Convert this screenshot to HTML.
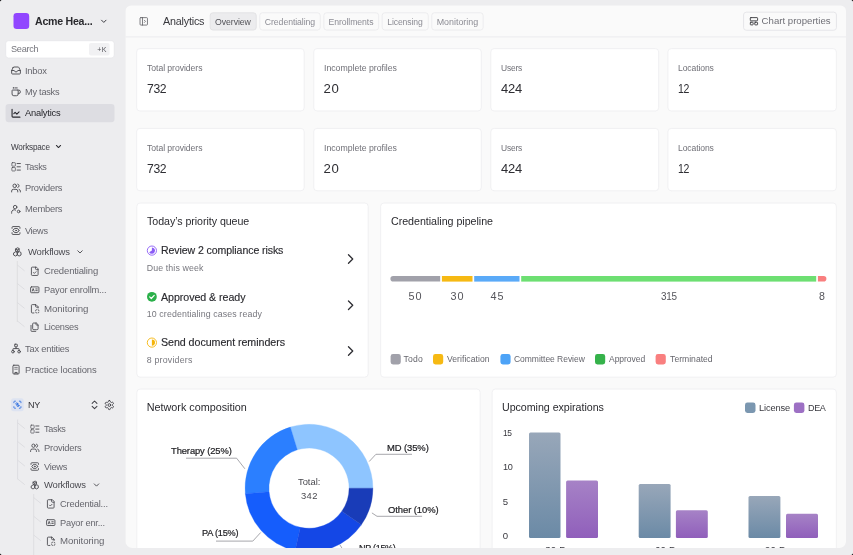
<!DOCTYPE html><html><head><meta charset="utf-8"><title>Analytics</title><style>

html,body{margin:0;padding:0;background:#000;}
body{width:853px;height:555px;overflow:hidden;position:relative;font-family:"Liberation Sans",sans-serif;}
#win{position:absolute;left:0;top:0;width:853px;height:555px;background:#ededef;border-radius:3px;overflow:hidden;}
#in{position:absolute;left:-8px;top:-8px;width:869px;height:571px;background:#ededef;will-change:transform;filter:blur(0.35px);}
#off{position:absolute;left:8px;top:8px;width:853px;height:555px;}
.t{position:absolute;white-space:nowrap;}
.a{position:absolute;}
svg{position:absolute;overflow:visible;}
.ic{fill:none;stroke:#4a4a50;stroke-width:2;stroke-linecap:round;stroke-linejoin:round;}

</style></head><body><div id="win"><div id="in"><div id="off">
<svg style="left:0;top:0" width="853" height="555">
<rect x="125.6" y="5.5" width="720.4" height="542.5" rx="5.5" fill="#fafafa"/>
<rect x="125.60" y="36.50" width="720.40" height="0.80" fill="#e8e8eb"/>
<rect x="13.50" y="13.10" width="15.70" height="15.80" fill="#9146ff" rx="3.2"/>
</svg>
<div class="t" style="top:15px;font-size:11.2px;line-height:12px;color:#2a2a2e;font-weight:700;letter-spacing:-0.263px;left:35.20px;transform:scaleX(0.9472);transform-origin:left center;"><span>Acme Hea...</span></div>
<svg style="left:0;top:0" width="853" height="555">
<g class="ic" transform="translate(99.30 16.80) scale(0.3750)" style="stroke:#3a3a40;stroke-width:2.6"><path d="m6 9 6 6 6-6"/></g>
<rect x="5.70" y="40.70" width="108.50" height="17.30" fill="#fff" rx="3" stroke="#e2e2e6" stroke-width="0.6"/>
</svg>
<div class="t" style="top:43px;font-size:9.8px;line-height:11px;color:#76767d;letter-spacing:-0.301px;left:10.70px;transform:scaleX(0.9377);transform-origin:left center;"><span>Search</span></div>
<svg style="left:0;top:0" width="853" height="555">
<rect x="89.00" y="43.10" width="20.60" height="12.50" fill="#f1f1f3" rx="2"/>
</svg>
<div class="t" style="top:46px;font-size:7px;line-height:7px;color:#55555b;letter-spacing:0.334px;left:97.30px;"><span>+K</span></div>
<svg style="left:0;top:0" width="853" height="555">
<rect x="5.60" y="104.10" width="108.90" height="18.10" fill="#dddde2" rx="3.2"/>
<g class="ic" transform="translate(10.75 65.25) scale(0.4375)" style="stroke:#4a4a50;stroke-width:2.1"><path d="M22 12h-6l-2 3h-4l-2-3H2"/><path d="M5.45 5.11 2 12v6a2 2 0 0 0 2 2h16a2 2 0 0 0 2-2v-6l-3.45-6.89A2 2 0 0 0 16.76 4H7.24a2 2 0 0 0-1.79 1.11z"/></g>
</svg>
<div class="t" style="top:65px;font-size:9.9px;line-height:11px;color:#66666d;letter-spacing:-0.256px;left:25.40px;transform:scaleX(0.9460);transform-origin:left center;"><span>Inbox</span></div>
<svg style="left:0;top:0" width="853" height="555">
<g class="ic" transform="translate(10.75 86.55) scale(0.4375)" style="stroke:#4a4a50;stroke-width:2.1"><path d="M10 2v2"/><path d="M14 2v2"/><path d="M6 2v2"/><path d="M16 8a1 1 0 0 1 1 1v8a4 4 0 0 1-4 4H7a4 4 0 0 1-4-4V9a1 1 0 0 1 1-1h14a4 4 0 1 1 0 8h-1"/></g>
</svg>
<div class="t" style="top:86px;font-size:9.9px;line-height:11px;color:#66666d;letter-spacing:-0.281px;left:25.40px;transform:scaleX(0.9351);transform-origin:left center;"><span>My tasks</span></div>
<svg style="left:0;top:0" width="853" height="555">
<g class="ic" transform="translate(10.75 107.95) scale(0.4375)" style="stroke:#26262b;stroke-width:2.5"><path d="M3 3v16a2 2 0 0 0 2 2h16"/><path d="m19 9-5 5-4-4-3 3"/></g>
</svg>
<div class="t" style="top:107px;font-size:9.9px;line-height:11px;color:#26262b;letter-spacing:-0.215px;left:25.40px;transform:scaleX(0.9445);transform-origin:left center;"><span>Analytics</span></div>
<div class="t" style="top:142px;font-size:8.6px;line-height:10px;color:#3a3a40;letter-spacing:-0.215px;left:10.50px;transform:scaleX(0.9488);transform-origin:left center;"><span>Workspace</span></div>
<svg style="left:0;top:0" width="853" height="555">
<g class="ic" transform="translate(54.30 142.30) scale(0.3500)" style="stroke:#2e2e33;stroke-width:3"><path d="m6 9 6 6 6-6"/></g>
<g class="ic" transform="translate(10.75 161.55) scale(0.4375)" style="stroke:#4a4a50;stroke-width:2.1"><rect x="2.500" y="2.500" width="8" height="8" rx="1.200" stroke-width="1.600"/><rect x="2.500" y="13.500" width="8" height="8" rx="1.200" stroke-width="1.600"/><path d="M14.500 4.500h7.500"/><path d="M14.500 12h7.500"/><path d="M14.500 19.500h7.500"/></g>
</svg>
<div class="t" style="top:161px;font-size:9.9px;line-height:11px;color:#66666d;letter-spacing:-0.377px;left:25.40px;transform:scaleX(0.9224);transform-origin:left center;"><span>Tasks</span></div>
<svg style="left:0;top:0" width="853" height="555">
<g class="ic" transform="translate(10.75 182.75) scale(0.4375)" style="stroke:#4a4a50;stroke-width:2.1"><path d="M16 21v-2a4 4 0 0 0-4-4H6a4 4 0 0 0-4 4v2"/><circle cx="9" cy="7" r="4"/><path d="M22 21v-2a4 4 0 0 0-3-3.87"/><path d="M16 3.13a4 4 0 0 1 0 7.75"/></g>
</svg>
<div class="t" style="top:182px;font-size:9.9px;line-height:11px;color:#66666d;letter-spacing:-0.237px;left:25.40px;transform:scaleX(0.9417);transform-origin:left center;"><span>Providers</span></div>
<svg style="left:0;top:0" width="853" height="555">
<g class="ic" transform="translate(10.75 204.05) scale(0.4375)" style="stroke:#4a4a50;stroke-width:2.1"><circle cx="10" cy="7" r="4"/><path d="M2 21v-2a6 6 0 0 1 9-5.2"/><circle cx="18" cy="17" r="3"/></g>
</svg>
<div class="t" style="top:203px;font-size:9.9px;line-height:11px;color:#66666d;letter-spacing:-0.274px;left:25.40px;transform:scaleX(0.9491);transform-origin:left center;"><span>Members</span></div>
<svg style="left:0;top:0" width="853" height="555">
<g class="ic" transform="translate(10.75 225.25) scale(0.4375)" style="stroke:#4a4a50;stroke-width:2.1"><path d="M21 17v2a2 2 0 0 1-2 2H5a2 2 0 0 1-2-2v-2"/><path d="M21 7V5a2 2 0 0 0-2-2H5a2 2 0 0 0-2 2v2"/><circle cx="12" cy="12" r="1"/><path d="M18.944 12.33a1 1 0 0 0 0-.66 7.5 7.5 0 0 0-13.888 0 1 1 0 0 0 0 .66 7.5 7.5 0 0 0 13.888 0"/></g>
</svg>
<div class="t" style="top:225px;font-size:9.9px;line-height:11px;color:#66666d;letter-spacing:-0.357px;left:25.40px;transform:scaleX(0.9295);transform-origin:left center;"><span>Views</span></div>
<svg style="left:0;top:0" width="853" height="555">
<g class="ic" transform="translate(12.05 246.85) scale(0.4375)" style="stroke:#4a4a50;stroke-width:2.1"><path d="M12 2.5 7.8 4.9v4.8L12 12l4.200-2.3V4.900z"/><path d="M7.800 11.500 3.500 13.900v4.800L7.800 21l4.200-2.300v-4.800z"/><path d="M16.200 11.500 12 13.900v4.800l4.200 2.300 4.300-2.300v-4.800z"/><path d="M7.800 4.900 12 7.200l4.200-2.300"/><path d="M12 7.200V12"/></g>
</svg>
<div class="t" style="top:246px;font-size:9.9px;line-height:11px;color:#4a4a50;letter-spacing:-0.189px;left:27.80px;transform:scaleX(0.9579);transform-origin:left center;"><span>Workflows</span></div>
<svg style="left:0;top:0" width="853" height="555">
<g class="ic" transform="translate(75.50 247.40) scale(0.3750)" style="stroke:#3e3e44;stroke-width:2.3"><path d="m6 9 6 6 6-6"/></g>
<path d="M17.3 261V322M17.3 265.0L24.5 270.8M17.3 283.5L24.5 289.3M17.3 302.5L24.5 308.3M17.3 320.9L24.5 326.7" fill="none" stroke="#d9d9dd" stroke-width="0.8"/>
<g class="ic" transform="translate(29.75 266.30) scale(0.4167)" style="stroke:#4a4a50;stroke-width:2.1"><path d="M15 2H6a2 2 0 0 0-2 2v16a2 2 0 0 0 2 2h12a2 2 0 0 0 2-2V7Z"/><path d="M14 2v4a2 2 0 0 0 2 2h4"/><path d="m9 15 2 2 4-4"/></g>
</svg>
<div class="t" style="top:265px;font-size:9.9px;line-height:11px;color:#66666d;letter-spacing:-0.150px;left:43.60px;transform:scaleX(0.9610);transform-origin:left center;"><span>Credentialing</span></div>
<svg style="left:0;top:0" width="853" height="555">
<g class="ic" transform="translate(29.75 284.80) scale(0.4167)" style="stroke:#4a4a50;stroke-width:2.1"><rect x="2" y="5" width="20" height="14" rx="2"/><path d="M6 15l2.200-6 2.200 6"/><path d="M14.500 10h3.500"/><path d="M14.500 14h3.500"/></g>
</svg>
<div class="t" style="top:284px;font-size:9.9px;line-height:11px;color:#66666d;letter-spacing:-0.200px;left:43.60px;transform:scaleX(0.9447);transform-origin:left center;"><span>Payor enrollm...</span></div>
<svg style="left:0;top:0" width="853" height="555">
<g class="ic" transform="translate(29.75 303.80) scale(0.4167)" style="stroke:#4a4a50;stroke-width:2.1"><path d="M20 10V7l-5-5H6a2 2 0 0 0-2 2v16a2 2 0 0 0 2 2h4"/><path d="M14 2v4a2 2 0 0 0 2 2h4"/><path d="M16 14a2 2 0 0 0-2 2"/><path d="M20 14a2 2 0 0 1 2 2"/><path d="M20 22a2 2 0 0 0 2-2"/><path d="M16 22a2 2 0 0 1-2-2"/></g>
</svg>
<div class="t" style="top:303px;font-size:9.9px;line-height:11px;color:#66666d;letter-spacing:-0.080px;left:43.60px;transform:scaleX(0.9805);transform-origin:left center;"><span>Monitoring</span></div>
<svg style="left:0;top:0" width="853" height="555">
<g class="ic" transform="translate(29.75 322.20) scale(0.4167)" style="stroke:#4a4a50;stroke-width:2.1"><path d="M20 7h-3a2 2 0 0 1-2-2V2"/><path d="M9 18a2 2 0 0 1-2-2V4a2 2 0 0 1 2-2h7l4 4v10a2 2 0 0 1-2 2Z"/><path d="M3 7.600v12.800A1.600 1.600 0 0 0 4.600 22h9.800"/></g>
</svg>
<div class="t" style="top:321px;font-size:9.9px;line-height:11px;color:#66666d;letter-spacing:-0.288px;left:43.60px;transform:scaleX(0.9333);transform-origin:left center;"><span>Licenses</span></div>
<svg style="left:0;top:0" width="853" height="555">
<g class="ic" transform="translate(10.75 343.35) scale(0.4375)" style="stroke:#4a4a50;stroke-width:2.1"><circle cx="5" cy="19" r="3"/><circle cx="19" cy="19" r="3"/><rect x="9" y="2" width="6" height="6" rx="1"/><path d="M5 16v-3a1 1 0 0 1 1-1h12a1 1 0 0 1 1 1v3"/><path d="M12 12V8"/></g>
</svg>
<div class="t" style="top:343px;font-size:9.9px;line-height:11px;color:#66666d;letter-spacing:-0.205px;left:25.20px;transform:scaleX(0.9416);transform-origin:left center;"><span>Tax entities</span></div>
<svg style="left:0;top:0" width="853" height="555">
<g class="ic" transform="translate(10.75 364.35) scale(0.4375)" style="stroke:#4a4a50;stroke-width:2.1"><rect x="5" y="2" width="14" height="20" rx="2"/><path d="M9.500 22v-3.500h5v3.500"/><path d="M9 7h6" stroke-width="1.500"/><path d="M9 11h6" stroke-width="1.500"/></g>
</svg>
<div class="t" style="top:364px;font-size:9.9px;line-height:11px;color:#66666d;letter-spacing:-0.153px;left:25.20px;transform:scaleX(0.9574);transform-origin:left center;"><span>Practice locations</span></div>
<svg style="left:0;top:0" width="853" height="555">
<rect x="11.10" y="398.20" width="12.60" height="13.00" fill="#dde3f1" rx="2.5"/>
<g class="ic" transform="translate(12.70 400.00) scale(0.3917)" style="stroke:#2f6fe0;stroke-width:2.2"><path d="M3 7V5a2 2 0 0 1 2-2h2"/><path d="M17 3h2a2 2 0 0 1 2 2v2"/><path d="M21 17v2a2 2 0 0 1-2 2h-2"/><path d="M7 21H5a2 2 0 0 1-2-2v-2"/><circle cx="10.500" cy="9.700" r="2.500"/><circle cx="13.500" cy="14.300" r="2.500"/></g>
</svg>
<div class="t" style="top:399px;font-size:9.9px;line-height:11px;color:#333338;letter-spacing:-0.400px;left:28.10px;transform:scaleX(0.9160);transform-origin:left center;"><span>NY</span></div>
<svg style="left:0;top:0" width="853" height="555">
<g class="ic" transform="translate(88.80 399.10) scale(0.4792)" style="stroke:#3e3e44;stroke-width:2.1"><path d="m7 15 5 5 5-5"/><path d="m7 9 5-5 5 5"/></g>
<g class="ic" transform="translate(103.90 399.60) scale(0.4542)" style="stroke:#3e3e44;stroke-width:2"><path d="M12.220 2h-.440a2 2 0 0 0-2 2v.180a2 2 0 0 1-1 1.730l-.430.250a2 2 0 0 1-2 0l-.150-.080a2 2 0 0 0-2.730.730l-.220.380a2 2 0 0 0 .730 2.730l.150.100a2 2 0 0 1 1 1.720v.510a2 2 0 0 1-1 1.740l-.150.090a2 2 0 0 0-.730 2.730l.220.380a2 2 0 0 0 2.730.730l.150-.080a2 2 0 0 1 2 0l.430.250a2 2 0 0 1 1 1.730V20a2 2 0 0 0 2 2h.440a2 2 0 0 0 2-2v-.180a2 2 0 0 1 1-1.730l.430-.250a2 2 0 0 1 2 0l.150.080a2 2 0 0 0 2.730-.730l.220-.390a2 2 0 0 0-.730-2.730l-.150-.080a2 2 0 0 1-1-1.740v-.500a2 2 0 0 1 1-1.740l.150-.090a2 2 0 0 0 .730-2.730l-.220-.380a2 2 0 0 0-2.730-.730l-.150.080a2 2 0 0 1-2 0l-.430-.250a2 2 0 0 1-1-1.730V4a2 2 0 0 0-2-2z"/><circle cx="12" cy="12" r="3"/></g>
<path d="M17.6 419.5V479.3M17.6 422.8L24.8 428.6M17.6 441.5L24.8 447.3M17.6 460.2L24.8 466.0M17.6 478.9L24.8 484.7" fill="none" stroke="#d9d9dd" stroke-width="0.8"/>
<g class="ic" transform="translate(29.75 424.10) scale(0.4167)" style="stroke:#4a4a50;stroke-width:2.1"><rect x="2.500" y="2.500" width="8" height="8" rx="1.200" stroke-width="1.600"/><rect x="2.500" y="13.500" width="8" height="8" rx="1.200" stroke-width="1.600"/><path d="M14.500 4.500h7.500"/><path d="M14.500 12h7.500"/><path d="M14.500 19.500h7.500"/></g>
</svg>
<div class="t" style="top:423px;font-size:9.9px;line-height:11px;color:#66666d;letter-spacing:-0.377px;left:43.90px;transform:scaleX(0.9224);transform-origin:left center;"><span>Tasks</span></div>
<svg style="left:0;top:0" width="853" height="555">
<g class="ic" transform="translate(29.75 442.80) scale(0.4167)" style="stroke:#4a4a50;stroke-width:2.1"><path d="M16 21v-2a4 4 0 0 0-4-4H6a4 4 0 0 0-4 4v2"/><circle cx="9" cy="7" r="4"/><path d="M22 21v-2a4 4 0 0 0-3-3.87"/><path d="M16 3.13a4 4 0 0 1 0 7.75"/></g>
</svg>
<div class="t" style="top:442px;font-size:9.9px;line-height:11px;color:#66666d;letter-spacing:-0.220px;left:43.90px;transform:scaleX(0.9461);transform-origin:left center;"><span>Providers</span></div>
<svg style="left:0;top:0" width="853" height="555">
<g class="ic" transform="translate(29.75 461.50) scale(0.4167)" style="stroke:#4a4a50;stroke-width:2.1"><path d="M21 17v2a2 2 0 0 1-2 2H5a2 2 0 0 1-2-2v-2"/><path d="M21 7V5a2 2 0 0 0-2-2H5a2 2 0 0 0-2 2v2"/><circle cx="12" cy="12" r="1"/><path d="M18.944 12.33a1 1 0 0 0 0-.66 7.5 7.5 0 0 0-13.888 0 1 1 0 0 0 0 .66 7.5 7.5 0 0 0 13.888 0"/></g>
</svg>
<div class="t" style="top:461px;font-size:9.9px;line-height:11px;color:#66666d;letter-spacing:-0.312px;left:43.90px;transform:scaleX(0.9388);transform-origin:left center;"><span>Views</span></div>
<svg style="left:0;top:0" width="853" height="555">
<g class="ic" transform="translate(29.75 480.20) scale(0.4167)" style="stroke:#4a4a50;stroke-width:2.1"><path d="M12 2.5 7.8 4.9v4.8L12 12l4.200-2.3V4.900z"/><path d="M7.800 11.500 3.500 13.900v4.800L7.800 21l4.200-2.300v-4.800z"/><path d="M16.200 11.500 12 13.900v4.800l4.200 2.300 4.300-2.300v-4.800z"/><path d="M7.800 4.900 12 7.200l4.200-2.300"/><path d="M12 7.200V12"/></g>
</svg>
<div class="t" style="top:479px;font-size:9.9px;line-height:11px;color:#4a4a50;letter-spacing:-0.189px;left:43.90px;transform:scaleX(0.9579);transform-origin:left center;"><span>Workflows</span></div>
<svg style="left:0;top:0" width="853" height="555">
<g class="ic" transform="translate(92.00 480.50) scale(0.3750)" style="stroke:#3e3e44;stroke-width:2.3"><path d="m6 9 6 6 6-6"/></g>
<path d="M33.7 494V555M33.7 497.59999999999997L40.900000000000006 503.4M33.7 516.3000000000001L40.900000000000006 522.1M33.7 535.0L40.900000000000006 540.8" fill="none" stroke="#d9d9dd" stroke-width="0.8"/>
<g class="ic" transform="translate(45.75 498.90) scale(0.4167)" style="stroke:#4a4a50;stroke-width:2.1"><path d="M15 2H6a2 2 0 0 0-2 2v16a2 2 0 0 0 2 2h12a2 2 0 0 0 2-2V7Z"/><path d="M14 2v4a2 2 0 0 0 2 2h4"/><path d="m9 15 2 2 4-4"/></g>
</svg>
<div class="t" style="top:498px;font-size:9.9px;line-height:11px;color:#66666d;letter-spacing:-0.197px;left:59.80px;transform:scaleX(0.9433);transform-origin:left center;"><span>Credential...</span></div>
<svg style="left:0;top:0" width="853" height="555">
<g class="ic" transform="translate(45.75 517.60) scale(0.4167)" style="stroke:#4a4a50;stroke-width:2.1"><rect x="2" y="5" width="20" height="14" rx="2"/><path d="M6 15l2.200-6 2.200 6"/><path d="M14.500 10h3.500"/><path d="M14.500 14h3.500"/></g>
</svg>
<div class="t" style="top:517px;font-size:9.9px;line-height:11px;color:#66666d;letter-spacing:-0.225px;left:59.80px;transform:scaleX(0.9370);transform-origin:left center;"><span>Payor enr...</span></div>
<svg style="left:0;top:0" width="853" height="555">
<g class="ic" transform="translate(45.75 536.30) scale(0.4167)" style="stroke:#4a4a50;stroke-width:2.1"><path d="M20 10V7l-5-5H6a2 2 0 0 0-2 2v16a2 2 0 0 0 2 2h4"/><path d="M14 2v4a2 2 0 0 0 2 2h4"/><path d="M16 14a2 2 0 0 0-2 2"/><path d="M20 14a2 2 0 0 1 2 2"/><path d="M20 22a2 2 0 0 0 2-2"/><path d="M16 22a2 2 0 0 1-2-2"/></g>
</svg>
<div class="t" style="top:535px;font-size:9.9px;line-height:11px;color:#66666d;letter-spacing:-0.090px;left:59.80px;transform:scaleX(0.9780);transform-origin:left center;"><span>Monitoring</span></div>
<svg style="left:0;top:0" width="853" height="555">
<g class="ic" transform="translate(138.80 16.40) scale(0.4125)" style="stroke:#55555b;stroke-width:1.8"><rect x="3" y="3" width="18" height="18" rx="2"/><path d="M9 3v18"/><path d="m13.500 9.300 2.700 2.700-2.700 2.700"/></g>
</svg>
<div class="t" style="top:15px;font-size:11.3px;line-height:12px;color:#38383d;letter-spacing:-0.209px;left:162.50px;transform:scaleX(0.9530);transform-origin:left center;"><span>Analytics</span></div>
<svg style="left:0;top:0" width="853" height="555">
<rect x="210.15" y="12.75" width="46.10" height="17.30" fill="#ececee" rx="2.8" stroke="#dcdce0" stroke-width="0.7"/>
</svg>
<div class="t" style="top:17px;font-size:8.9px;line-height:10px;color:#525258;letter-spacing:-0.077px;left:133.20px;width:200px;text-align:center;text-indent:-0.077px;transform:scaleX(0.9819);transform-origin:center center;"><span>Overview</span></div>
<svg style="left:0;top:0" width="853" height="555">
<rect x="259.75" y="12.75" width="60.50" height="17.30" fill="#fafafa" rx="2.8" stroke="#e6e6e9" stroke-width="0.7"/>
</svg>
<div class="t" style="top:17px;font-size:8.9px;line-height:10px;color:#8c8c94;letter-spacing:-0.075px;left:190.00px;width:200px;text-align:center;text-indent:-0.075px;transform:scaleX(0.9786);transform-origin:center center;"><span>Credentialing</span></div>
<svg style="left:0;top:0" width="853" height="555">
<rect x="323.85" y="12.75" width="54.80" height="17.30" fill="#fafafa" rx="2.8" stroke="#e6e6e9" stroke-width="0.7"/>
</svg>
<div class="t" style="top:17px;font-size:8.9px;line-height:10px;color:#8c8c94;letter-spacing:-0.084px;left:251.25px;width:200px;text-align:center;text-indent:-0.084px;transform:scaleX(0.9778);transform-origin:center center;"><span>Enrollments</span></div>
<svg style="left:0;top:0" width="853" height="555">
<rect x="382.15" y="12.75" width="46.10" height="17.30" fill="#fafafa" rx="2.8" stroke="#e6e6e9" stroke-width="0.7"/>
</svg>
<div class="t" style="top:17px;font-size:8.9px;line-height:10px;color:#8c8c94;letter-spacing:-0.113px;left:305.20px;width:200px;text-align:center;text-indent:-0.113px;transform:scaleX(0.9699);transform-origin:center center;"><span>Licensing</span></div>
<svg style="left:0;top:0" width="853" height="555">
<rect x="431.75" y="12.75" width="51.40" height="17.30" fill="#fafafa" rx="2.8" stroke="#e6e6e9" stroke-width="0.7"/>
</svg>
<div class="t" style="top:17px;font-size:8.9px;line-height:10px;color:#8c8c94;letter-spacing:0.007px;left:357.45px;width:200px;text-align:center;text-indent:0.007px;"><span>Monitoring</span></div>
<svg style="left:0;top:0" width="853" height="555">
<rect x="743.55" y="12.15" width="92.90" height="18.10" fill="#fafafa" rx="2.8" stroke="#dedee2" stroke-width="0.7"/>
<g class="ic" transform="translate(749.10 16.40) scale(0.4042)" style="stroke:#36363b;stroke-width:2.2"><rect x="3" y="3" width="18" height="8" rx="1.500"/><rect x="3" y="14.500" width="7" height="6.500" rx="1.200"/><rect x="14" y="14.500" width="7" height="6.500" rx="1.200"/></g>
</svg>
<div class="t" style="top:15px;font-size:9.6px;line-height:11px;color:#707077;letter-spacing:0.014px;left:761.60px;"><span>Chart properties</span></div>
<svg style="left:0;top:0" width="853" height="555">
<rect x="136.65" y="48.65" width="167.50" height="62.30" fill="#fff" rx="3.3" stroke="#ebebee" stroke-width="0.7"/>
</svg>
<div class="t" style="top:63px;font-size:8.8px;line-height:10px;color:#707077;letter-spacing:-0.055px;left:146.50px;transform:scaleX(0.9833);transform-origin:left center;"><span>Total providers</span></div>
<div class="t" style="top:81px;font-size:13.2px;line-height:15px;color:#2e2e33;letter-spacing:-0.400px;left:146.50px;transform:scaleX(0.9238);transform-origin:left center;"><span>732</span></div>
<svg style="left:0;top:0" width="853" height="555">
<rect x="313.75" y="48.65" width="167.50" height="62.30" fill="#fff" rx="3.3" stroke="#ebebee" stroke-width="0.7"/>
</svg>
<div class="t" style="top:63px;font-size:8.8px;line-height:10px;color:#707077;letter-spacing:-0.021px;left:323.60px;transform:scaleX(0.9937);transform-origin:left center;"><span>Incomplete profiles</span></div>
<div class="t" style="top:81px;font-size:13.2px;line-height:15px;color:#2e2e33;letter-spacing:0.528px;left:323.60px;"><span>20</span></div>
<svg style="left:0;top:0" width="853" height="555">
<rect x="490.85" y="48.65" width="167.80" height="62.30" fill="#fff" rx="3.3" stroke="#ebebee" stroke-width="0.7"/>
</svg>
<div class="t" style="top:63px;font-size:8.8px;line-height:10px;color:#707077;letter-spacing:-0.189px;left:500.70px;transform:scaleX(0.9583);transform-origin:left center;"><span>Users</span></div>
<div class="t" style="top:81px;font-size:13.2px;line-height:15px;color:#2e2e33;letter-spacing:-0.161px;left:500.70px;transform:scaleX(0.9819);transform-origin:left center;"><span>424</span></div>
<svg style="left:0;top:0" width="853" height="555">
<rect x="667.95" y="48.65" width="168.40" height="62.30" fill="#fff" rx="3.3" stroke="#ebebee" stroke-width="0.7"/>
</svg>
<div class="t" style="top:63px;font-size:8.8px;line-height:10px;color:#707077;letter-spacing:-0.100px;left:677.80px;transform:scaleX(0.9736);transform-origin:left center;"><span>Locations</span></div>
<div class="t" style="top:81px;font-size:13.2px;line-height:15px;color:#2e2e33;letter-spacing:-0.400px;left:677.80px;transform:scaleX(0.8000);transform-origin:left center;"><span>12</span></div>
<svg style="left:0;top:0" width="853" height="555">
<rect x="136.65" y="128.45" width="167.50" height="62.30" fill="#fff" rx="3.3" stroke="#ebebee" stroke-width="0.7"/>
</svg>
<div class="t" style="top:143px;font-size:8.8px;line-height:10px;color:#707077;letter-spacing:-0.055px;left:146.50px;transform:scaleX(0.9833);transform-origin:left center;"><span>Total providers</span></div>
<div class="t" style="top:161px;font-size:13.2px;line-height:15px;color:#2e2e33;letter-spacing:-0.400px;left:146.50px;transform:scaleX(0.9238);transform-origin:left center;"><span>732</span></div>
<svg style="left:0;top:0" width="853" height="555">
<rect x="313.75" y="128.45" width="167.50" height="62.30" fill="#fff" rx="3.3" stroke="#ebebee" stroke-width="0.7"/>
</svg>
<div class="t" style="top:143px;font-size:8.8px;line-height:10px;color:#707077;letter-spacing:-0.021px;left:323.60px;transform:scaleX(0.9937);transform-origin:left center;"><span>Incomplete profiles</span></div>
<div class="t" style="top:161px;font-size:13.2px;line-height:15px;color:#2e2e33;letter-spacing:0.528px;left:323.60px;"><span>20</span></div>
<svg style="left:0;top:0" width="853" height="555">
<rect x="490.85" y="128.45" width="167.80" height="62.30" fill="#fff" rx="3.3" stroke="#ebebee" stroke-width="0.7"/>
</svg>
<div class="t" style="top:143px;font-size:8.8px;line-height:10px;color:#707077;letter-spacing:-0.189px;left:500.70px;transform:scaleX(0.9583);transform-origin:left center;"><span>Users</span></div>
<div class="t" style="top:161px;font-size:13.2px;line-height:15px;color:#2e2e33;letter-spacing:-0.161px;left:500.70px;transform:scaleX(0.9819);transform-origin:left center;"><span>424</span></div>
<svg style="left:0;top:0" width="853" height="555">
<rect x="667.95" y="128.45" width="168.40" height="62.30" fill="#fff" rx="3.3" stroke="#ebebee" stroke-width="0.7"/>
</svg>
<div class="t" style="top:143px;font-size:8.8px;line-height:10px;color:#707077;letter-spacing:-0.100px;left:677.80px;transform:scaleX(0.9736);transform-origin:left center;"><span>Locations</span></div>
<div class="t" style="top:161px;font-size:13.2px;line-height:15px;color:#2e2e33;letter-spacing:-0.400px;left:677.80px;transform:scaleX(0.8000);transform-origin:left center;"><span>12</span></div>
<svg style="left:0;top:0" width="853" height="555">
<rect x="136.85" y="203.05" width="231.30" height="174.10" fill="#fff" rx="3.3" stroke="#ebebee" stroke-width="0.7"/>
</svg>
<div class="t" style="top:215px;font-size:10.8px;line-height:12px;color:#2a2a2f;letter-spacing:-0.055px;left:146.80px;transform:scaleX(0.9865);transform-origin:left center;"><span>Today&#8217;s priority queue</span></div>
<svg style="left:0;top:0" width="853" height="555">
<circle cx="151.9" cy="250.6" r="4.6" fill="#fff" stroke="#8b5cf6" stroke-width="0.9"/><path d="M151.9 250.6L151.9 247.5A3.100 3.100 0 1 1 149.20000000000002 252.15Z" fill="#8b5cf6"/>
</svg>
<div class="t" style="top:244px;font-size:10.8px;line-height:12px;color:#2a2a2f;-webkit-text-stroke:0.15px #2a2a2f;letter-spacing:-0.090px;left:161.40px;transform:scaleX(0.9788);transform-origin:left center;"><span>Review 2 compliance risks</span></div>
<div class="t" style="top:263px;font-size:8.8px;line-height:10px;color:#77777e;letter-spacing:0.103px;left:146.80px;"><span>Due this week</span></div>
<svg style="left:0;top:0" width="853" height="555">
<g class="ic" transform="translate(342.10 250.50) scale(0.7083)" style="stroke:#2e2e33;stroke-width:1.85"><path d="m9 18 6-6-6-6"/></g>
<circle cx="151.9" cy="296.8" r="4.8999999999999995" fill="#2bb04a"/><path d="M149.70000000000002 296.90000000000003l1.600 1.600 2.900-3.100" fill="none" stroke="#fff" stroke-width="1.200" stroke-linecap="round" stroke-linejoin="round"/>
</svg>
<div class="t" style="top:291px;font-size:10.8px;line-height:12px;color:#2a2a2f;-webkit-text-stroke:0.15px #2a2a2f;letter-spacing:-0.058px;left:161.40px;transform:scaleX(0.9875);transform-origin:left center;"><span>Approved &amp; ready</span></div>
<div class="t" style="top:309px;font-size:8.8px;line-height:10px;color:#77777e;letter-spacing:0.112px;left:146.80px;"><span>10 credentialing cases ready</span></div>
<svg style="left:0;top:0" width="853" height="555">
<g class="ic" transform="translate(342.10 296.70) scale(0.7083)" style="stroke:#2e2e33;stroke-width:1.85"><path d="m9 18 6-6-6-6"/></g>
<circle cx="151.9" cy="342.6" r="4.6" fill="#fff" stroke="#f5b50a" stroke-width="0.9"/><path d="M151.9 339.5A3.100 3.100 0 0 1 151.9 345.70000000000005Z" fill="#f5b50a"/>
</svg>
<div class="t" style="top:336px;font-size:10.8px;line-height:12px;color:#2a2a2f;-webkit-text-stroke:0.15px #2a2a2f;letter-spacing:-0.054px;left:161.40px;transform:scaleX(0.9884);transform-origin:left center;"><span>Send document reminders</span></div>
<div class="t" style="top:355px;font-size:8.8px;line-height:10px;color:#77777e;letter-spacing:0.197px;left:146.80px;"><span>8 providers</span></div>
<svg style="left:0;top:0" width="853" height="555">
<g class="ic" transform="translate(342.10 342.50) scale(0.7083)" style="stroke:#2e2e33;stroke-width:1.85"><path d="m9 18 6-6-6-6"/></g>
<rect x="380.65" y="203.05" width="455.70" height="174.10" fill="#fff" rx="3.3" stroke="#ebebee" stroke-width="0.7"/>
</svg>
<div class="t" style="top:215px;font-size:10.8px;line-height:12px;color:#2a2a2f;letter-spacing:-0.040px;left:391.00px;transform:scaleX(0.9902);transform-origin:left center;"><span>Credentialing pipeline</span></div>
<svg style="left:0;top:0" width="853" height="555">
<path d="M393.20 276.0H440.2V281.6H393.20A2.8000000000000114 2.8000000000000114 0 0 1 393.20 276.0Z" fill="#a1a1aa"/>
<rect x="441.9" y="276.0" width="30.60" height="5.60" fill="#f6b913"/>
<rect x="474.2" y="276.0" width="45.30" height="5.60" fill="#5aaaf8"/>
<rect x="521.2" y="276.0" width="295.00" height="5.60" fill="#6ddf72"/>
<path d="M817.9 276.0H823.60A2.8000000000000114 2.8000000000000114 0 0 1 823.60 281.6H817.9Z" fill="#f97f7f"/>
</svg>
<div class="t" style="top:290px;font-size:10.6px;line-height:12px;color:#55555b;letter-spacing:0.900px;left:315.30px;width:200px;text-align:center;text-indent:0.900px;transform:scaleX(1.0239);transform-origin:center center;"><span>50</span></div>
<div class="t" style="top:290px;font-size:10.6px;line-height:12px;color:#55555b;letter-spacing:0.900px;left:356.60px;width:200px;text-align:center;text-indent:0.900px;transform:scaleX(1.0239);transform-origin:center center;"><span>30</span></div>
<div class="t" style="top:290px;font-size:10.6px;line-height:12px;color:#55555b;letter-spacing:0.900px;left:396.80px;width:200px;text-align:center;text-indent:0.900px;transform:scaleX(1.0239);transform-origin:center center;"><span>45</span></div>
<div class="t" style="top:290px;font-size:10.6px;line-height:12px;color:#55555b;letter-spacing:-0.400px;left:568.60px;width:200px;text-align:center;text-indent:-0.400px;transform:scaleX(0.9356);transform-origin:center center;"><span>315</span></div>
<div class="t" style="top:290px;font-size:10.6px;line-height:12px;color:#55555b;left:721.90px;width:200px;text-align:center;"><span>8</span></div>
<svg style="left:0;top:0" width="853" height="555">
<rect x="390.60" y="354.00" width="10.20" height="10.40" fill="#a1a1aa" rx="2.4"/>
</svg>
<div class="t" style="top:354px;font-size:8.6px;line-height:10px;color:#66666d;letter-spacing:0.220px;left:403.40px;"><span>Todo</span></div>
<svg style="left:0;top:0" width="853" height="555">
<rect x="433.00" y="354.00" width="10.20" height="10.40" fill="#f6b913" rx="2.4"/>
</svg>
<div class="t" style="top:354px;font-size:8.6px;line-height:10px;color:#66666d;letter-spacing:0.041px;left:447.00px;"><span>Verification</span></div>
<svg style="left:0;top:0" width="853" height="555">
<rect x="500.40" y="354.00" width="10.20" height="10.40" fill="#4da3f7" rx="2.4"/>
</svg>
<div class="t" style="top:354px;font-size:8.6px;line-height:10px;color:#66666d;letter-spacing:-0.040px;left:513.80px;transform:scaleX(0.9898);transform-origin:left center;"><span>Committee Review</span></div>
<svg style="left:0;top:0" width="853" height="555">
<rect x="595.00" y="354.00" width="10.20" height="10.40" fill="#35b24a" rx="2.4"/>
</svg>
<div class="t" style="top:354px;font-size:8.6px;line-height:10px;color:#66666d;letter-spacing:-0.038px;left:609.00px;transform:scaleX(0.9910);transform-origin:left center;"><span>Approved</span></div>
<svg style="left:0;top:0" width="853" height="555">
<rect x="655.60" y="354.00" width="10.20" height="10.40" fill="#f97f7f" rx="2.4"/>
</svg>
<div class="t" style="top:354px;font-size:8.6px;line-height:10px;color:#66666d;left:670.10px;"><span>Terminated</span></div>
<svg style="left:0;top:0" width="853" height="555">
<rect x="136.85" y="389.05" width="343.30" height="170.60" fill="#fff" rx="3.3" stroke="#ebebee" stroke-width="0.7"/>
</svg>
<div class="t" style="top:401px;font-size:10.8px;line-height:12px;color:#2a2a2f;letter-spacing:-0.013px;left:146.80px;"><span>Network composition</span></div>
<svg style="left:0;top:0" width="853" height="555">
<path d="M372.90 488.20A63.9 63.9 0 0 0 290.32 427.09L297.28 449.85A40.1 40.1 0 0 1 349.10 488.20Z" fill="#8ec5ff" stroke="#8ec5ff" stroke-width="0.35"/><path d="M290.32 427.09A63.9 63.9 0 0 0 245.34 493.77L269.05 491.69A40.1 40.1 0 0 1 297.28 449.85Z" fill="#2b7fff" stroke="#2b7fff" stroke-width="0.35"/><path d="M245.34 493.77A63.9 63.9 0 0 0 295.17 550.59L300.32 527.35A40.1 40.1 0 0 1 269.05 491.69Z" fill="#155dfc" stroke="#155dfc" stroke-width="0.35"/><path d="M295.17 550.59A63.9 63.9 0 0 0 361.34 524.85L341.85 511.20A40.1 40.1 0 0 1 300.32 527.35Z" fill="#1447e6" stroke="#1447e6" stroke-width="0.35"/><path d="M361.34 524.85A63.9 63.9 0 0 0 372.90 488.20L349.10 488.20A40.1 40.1 0 0 1 341.85 511.20Z" fill="#193cb8" stroke="#193cb8" stroke-width="0.35"/><path d="M369.200 461.500L375.900 454.300H412" fill="none" stroke="#8a8a90" stroke-width="0.75"/><path d="M371.900 512.900L377 516.300H422.100" fill="none" stroke="#8a8a90" stroke-width="0.75"/><path d="M244.900 468.800L236.600 458.200H186" fill="none" stroke="#8a8a90" stroke-width="0.75"/><path d="M260.700 532.500L252.800 541.100H216" fill="none" stroke="#8a8a90" stroke-width="0.75"/><path d="M340 545L345 553" fill="none" stroke="#8a8a90" stroke-width="0.75"/>
</svg>
<div class="t" style="top:476px;font-size:9.4px;line-height:11px;color:#4a4a50;letter-spacing:0.019px;left:209.20px;width:200px;text-align:center;text-indent:0.019px;"><span>Total:</span></div>
<div class="t" style="top:490px;font-size:9.4px;line-height:11px;color:#4a4a50;letter-spacing:0.422px;left:209.20px;width:200px;text-align:center;text-indent:0.422px;"><span>342</span></div>
<div class="t" style="top:442px;font-size:9.6px;line-height:11px;color:#1f1f23;-webkit-text-stroke:0.22px #1f1f23;letter-spacing:-0.089px;left:386.60px;transform:scaleX(0.9821);transform-origin:left center;"><span>MD (35%)</span></div>
<div class="t" style="top:504px;font-size:9.6px;line-height:11px;color:#1f1f23;-webkit-text-stroke:0.22px #1f1f23;letter-spacing:-0.075px;left:387.70px;transform:scaleX(0.9822);transform-origin:left center;"><span>Other (10%)</span></div>
<div class="t" style="top:445px;font-size:9.6px;line-height:11px;color:#1f1f23;-webkit-text-stroke:0.22px #1f1f23;letter-spacing:-0.099px;left:171.20px;transform:scaleX(0.9766);transform-origin:left center;"><span>Therapy (25%)</span></div>
<div class="t" style="top:527px;font-size:9.6px;line-height:11px;color:#1f1f23;-webkit-text-stroke:0.22px #1f1f23;letter-spacing:-0.207px;left:202.00px;transform:scaleX(0.9539);transform-origin:left center;"><span>PA (15%)</span></div>
<div class="t" style="top:542px;font-size:9.6px;line-height:11px;color:#1f1f23;-webkit-text-stroke:0.22px #1f1f23;letter-spacing:-0.297px;left:358.60px;transform:scaleX(0.9354);transform-origin:left center;"><span>NP (15%)</span></div>
<svg style="left:0;top:0" width="853" height="555">
<rect x="492.15" y="389.05" width="344.20" height="170.60" fill="#fff" rx="3.3" stroke="#ebebee" stroke-width="0.7"/>
</svg>
<div class="t" style="top:401px;font-size:10.8px;line-height:12px;color:#2a2a2f;letter-spacing:-0.046px;left:502.30px;transform:scaleX(0.9897);transform-origin:left center;"><span>Upcoming expirations</span></div>
<svg style="left:0;top:0" width="853" height="555">
<rect x="745.00" y="402.50" width="10.50" height="10.50" fill="#7b97b0" rx="2.4"/>
</svg>
<div class="t" style="top:402px;font-size:9.6px;line-height:11px;color:#3a3a40;letter-spacing:-0.148px;left:758.50px;transform:scaleX(0.9662);transform-origin:left center;"><span>License</span></div>
<svg style="left:0;top:0" width="853" height="555">
<rect x="793.90" y="402.50" width="10.50" height="10.50" fill="#9d70c4" rx="2.4"/>
</svg>
<div class="t" style="top:402px;font-size:9.6px;line-height:11px;color:#3a3a40;letter-spacing:-0.400px;left:807.50px;transform:scaleX(0.9454);transform-origin:left center;"><span>DEA</span></div>
<div class="t" style="top:427px;font-size:9.6px;line-height:11px;color:#3a3a40;letter-spacing:-0.400px;left:502.70px;transform:scaleX(0.8762);transform-origin:left center;"><span>15</span></div>
<div class="t" style="top:461px;font-size:9.6px;line-height:11px;color:#3a3a40;letter-spacing:-0.392px;left:502.70px;transform:scaleX(0.9534);transform-origin:left center;"><span>10</span></div>
<div class="t" style="top:496px;font-size:9.6px;line-height:11px;color:#3a3a40;left:502.70px;"><span>5</span></div>
<div class="t" style="top:530px;font-size:9.6px;line-height:11px;color:#3a3a40;left:502.70px;"><span>0</span></div>
<svg style="left:0;top:0" width="853" height="555">
<defs><linearGradient id="gL" x1="0" y1="0" x2="0" y2="1"><stop offset="0" stop-color="#98a7b9"/><stop offset="1" stop-color="#6b8aa6"/></linearGradient><linearGradient id="gD" x1="0" y1="0" x2="0" y2="1"><stop offset="0" stop-color="#a682c6"/><stop offset="1" stop-color="#905fbb"/></linearGradient></defs>
<rect x="529" y="432.5" width="31.50" height="105.50" rx="1.5" fill="url(#gL)"/>
<rect x="566.1" y="480.6" width="31.90" height="57.40" rx="1.5" fill="url(#gD)"/>
<rect x="638.7" y="484" width="31.90" height="54.00" rx="1.5" fill="url(#gL)"/>
<rect x="675.9" y="510.3" width="31.90" height="27.70" rx="1.5" fill="url(#gD)"/>
<rect x="748.5" y="495.9" width="31.90" height="42.10" rx="1.5" fill="url(#gL)"/>
<rect x="786" y="513.8" width="32.00" height="24.20" rx="1.5" fill="url(#gD)"/>
</svg>
<div class="t" style="top:544px;font-size:9.6px;line-height:11px;color:#3a3a40;letter-spacing:0.199px;left:463.50px;width:200px;text-align:center;text-indent:0.199px;"><span>30 Days</span></div>
<div class="t" style="top:544px;font-size:9.6px;line-height:11px;color:#3a3a40;letter-spacing:0.199px;left:573.20px;width:200px;text-align:center;text-indent:0.199px;"><span>60 Days</span></div>
<div class="t" style="top:544px;font-size:9.6px;line-height:11px;color:#3a3a40;letter-spacing:0.199px;left:683.20px;width:200px;text-align:center;text-indent:0.199px;"><span>90 Days</span></div>
<svg style="left:0;top:0" width="853" height="555">
<path d="M125.600 541.500V556H846V541.500A6.500 6.500 0 0 1 839.500 548H132.100A6.500 6.500 0 0 1 125.600 541.500Z" fill="#ededef"/>
</svg>
</div></div></div></body></html>
